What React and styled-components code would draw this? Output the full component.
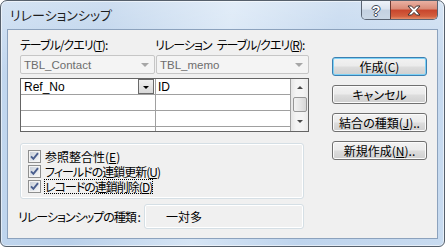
import styled, { createGlobalStyle } from "styled-components";

const JP = `"Noto Sans CJK JP", "Noto Sans", sans-serif`;
const LATIN = `"Liberation Sans", Arial, sans-serif`;

const GlobalStyle = createGlobalStyle`
  html, body {
    margin: 0;
    padding: 0;
    background: #ffffff;
  }
  body {
    font-family: ${JP};
  }
`;

const Window = styled.div`
  box-sizing: border-box;
  width: 445px;
  height: 247px;
  padding: 0 6px 7px;
  display: flex;
  flex-direction: column;
  border: 1px solid #56606c;
  border-radius: 7px 7px 6px 6px;
  box-shadow: inset 0 0 0 1px rgba(255, 255, 255, 0.55);
  background:
    linear-gradient(180deg, rgba(255, 255, 255, 0.3), rgba(255, 255, 255, 0) 30%),
    linear-gradient(100deg, #c3d8ef 0%, #b9d0ea 22%, #d6e5f5 48%, #bed4ed 70%, #c8dbf0 100%);
`;

const TitleBar = styled.div`
  height: 28px;
  display: flex;
  align-items: flex-start;
`;

const Title = styled.div`
  align-self: center;
  padding: 0 0 1px 3px;
  font-family: ${JP};
  font-feature-settings: "palt";
  font-size: 13px;
  color: #1e1e1e;
`;

const CaptionButtons = styled.div`
  margin-left: auto;
  display: flex;
  height: 19px;
  border: 1px solid #5a6473;
  border-top: none;
  border-radius: 0 0 5px 5px;
  overflow: hidden;
  box-sizing: border-box;
`;

const CaptionButton = styled.div`
  width: ${(p) => p.$w}px;
  display: flex;
  align-items: center;
  justify-content: center;
  box-sizing: border-box;
  background: ${(p) =>
    p.$close
      ? "linear-gradient(#eab1a3 0%, #d98a76 45%, #c8452c 50%, #d3603f 85%, #e6916e 100%)"
      : "linear-gradient(#eef3f9 0%, #dbe4ef 45%, #c4d1e1 50%, #cad7e6 100%)"};
  border-left: ${(p) => (p.$close ? "1px solid #6b3a33" : "none")};
`;

const HelpGlyph = styled.span`
  font-family: ${LATIN};
  font-weight: bold;
  font-size: 14px;
  line-height: 1;
  color: #ffffff;
  text-shadow: 1px 0 #3f4a5a, -1px 0 #3f4a5a, 0 1px #3f4a5a, 0 -1px #3f4a5a;
  margin-top: 1px;
`;

const Client = styled.div`
  flex: 1;
  display: flex;
  align-items: flex-start;
  box-sizing: border-box;
  border: 1px solid #8ca2bd;
  background: #f0f0f0;
  font-family: ${JP};
  font-feature-settings: "palt";
  font-size: 12px;
  color: #000;
`;

const LeftColumn = styled.div`
  width: 289px;
  margin-left: 12px;
  padding-top: 8px;
  display: flex;
  flex-direction: column;
`;

const LabelRow = styled.div`
  display: flex;
  height: 14px;
  line-height: 14px;
`;

const Label = styled.div`
  flex: none;
  width: ${(p) => p.$w || "auto"};
  white-space: nowrap;
  letter-spacing: -1px;
`;

const ComboRow = styled.div`
  display: flex;
  gap: 1px;
  margin-top: 3px;
`;

const Combo = styled.div`
  box-sizing: border-box;
  width: ${(p) => p.$w}px;
  height: 19px;
  border: 1px solid #c6c6c6;
  border-radius: 2px;
  background: #f4f4f4;
  display: flex;
  align-items: center;
  padding: 0 5px 0 3px;
  font-family: ${LATIN};
  font-size: 11.5px;
  color: #6d6d6d;
`;

const ComboText = styled.span`
  flex: 1;
`;

const Triangle = styled.span`
  width: 0;
  height: 0;
  border-left: ${(p) => p.$s}px solid transparent;
  border-right: ${(p) => p.$s}px solid transparent;
  ${(p) => (p.$up ? "border-bottom" : "border-top")}: ${(p) => p.$s}px solid ${(p) => p.$c};
`;

const Grid = styled.div`
  box-sizing: border-box;
  margin-top: 4px;
  height: 54px;
  border: 1px solid #646464;
  background: #ffffff;
  display: flex;
  overflow: hidden;
`;

const Cells = styled.div`
  width: 270px;
  display: flex;
  flex-direction: column;
`;

const Row = styled.div`
  display: grid;
  grid-template-columns: 135px 135px;
  flex: none;
  height: 16px;
  box-sizing: border-box;
  border-bottom: 1px solid #a0a0a0;
`;

const Cell = styled.div`
  border-right: 1px solid #a0a0a0;
  display: flex;
  align-items: center;
  padding-left: ${(p) => p.$pad}px;
  font-family: ${LATIN};
  font-size: 12px;
  color: #000;
`;

const CellText = styled.span`
  flex: 1;
`;

const DropButton = styled.div`
  box-sizing: border-box;
  width: 16px;
  height: 15px;
  margin-right: 1px;
  border: 1px solid #6a6a6a;
  background: linear-gradient(#f0f0f0, #d8d8d8);
  display: flex;
  align-items: flex-end;
  justify-content: center;
  padding-bottom: 4px;
`;

const Scrollbar = styled.div`
  width: 17px;
  display: flex;
  flex-direction: column;
  background: linear-gradient(90deg, #e6e6e6, #f4f4f4 30%, #f4f4f4 70%, #eaeaea);
`;

const ScrollArrow = styled.div`
  height: ${(p) => p.$h}px;
  flex: none;
  display: flex;
  align-items: center;
  justify-content: center;
`;

const Thumb = styled.div`
  height: 15px;
  margin: 1px 1px 0 2px;
  box-sizing: border-box;
  border: 1px solid #979797;
  border-radius: 2px;
  background: linear-gradient(90deg, #f2f2f2, #e6e6e6 50%, #d6d6d6);
`;

const GroupBox = styled.div`
  box-sizing: border-box;
  width: 284px;
  height: 56px;
  margin-top: 11px;
  border: 1px solid #d5dfe5;
  border-radius: 3px;
  box-shadow: inset 0 0 0 1px #ffffff;
  padding: 5px 0 0 7px;
  display: flex;
  flex-direction: column;
`;

const CheckRow = styled.div`
  height: 15px;
  display: flex;
  align-items: center;
  gap: 4px;
`;

const CheckLabel = styled.div`
  height: 13px;
  line-height: 13px;
  white-space: nowrap;
  letter-spacing: ${(p) => p.$ls}px;
  border: 1px ${(p) => (p.$focus ? "dotted #000" : "solid transparent")};
  margin-left: -1px;
`;

const BottomRow = styled.div`
  display: flex;
  align-items: center;
  margin-top: 5px;
  margin-left: -2px;
`;

const BottomLabel = styled.div`
  flex: none;
  width: 126px;
  white-space: nowrap;
  letter-spacing: -1px;
`;

const ReadOnlyBox = styled.div`
  box-sizing: border-box;
  width: 160px;
  height: 25px;
  border: 1px solid #d5dfe5;
  border-radius: 3px;
  box-shadow: inset 0 0 0 1px #ffffff;
  display: flex;
  align-items: center;
  padding: 0 0 1px 21px;
`;

const RightColumn = styled.div`
  margin-left: 23px;
  margin-top: 27px;
  display: flex;
  flex-direction: column;
  gap: 9px;
`;

const Button = styled.button`
  box-sizing: border-box;
  width: 95px;
  height: 19px;
  padding: 0;
  border: 1px solid ${(p) => (p.$default ? "#3c7fb1" : "#707070")};
  border-radius: 3px;
  background: linear-gradient(#f2f2f2 0%, #ebebeb 48%, #dddddd 52%, #cfcfcf 100%);
  box-shadow: ${(p) => (p.$default ? "inset 0 0 0 1px #7ed2f6" : "inset 0 0 0 1px #fbfbfb")};
  font-family: ${JP};
  font-feature-settings: "palt";
  font-size: 12px;
  line-height: 16px;
  color: #000;
  white-space: nowrap;
`;

const CheckBox = () => (
  <svg width="13" height="13" viewBox="0 0 13 13">
    <defs>
      <linearGradient id="cbfill" x1="0" y1="0" x2="1" y2="1">
        <stop offset="0" stopColor="#c9d0da" />
        <stop offset="1" stopColor="#f6f7f8" />
      </linearGradient>
    </defs>
    <rect x="0.5" y="0.5" width="12" height="12" fill="#f4f4f4" stroke="#8e8f8f" />
    <rect x="2" y="2" width="9" height="9" fill="url(#cbfill)" />
    <path d="M3 6.3 L5.4 8.9 L10 3.2" fill="none" stroke="#4a5f8f" strokeWidth="1.9" />
  </svg>
);

const CloseIcon = () => (
  <svg width="14" height="11" viewBox="0 0 14 11">
    <path
      d="M1 1 H4.5 L7 3.6 L9.5 1 H13 L9 5.5 L13 10 H9.5 L7 7.4 L4.5 10 H1 L5 5.5 Z"
      fill="#ffffff"
      stroke="#3d3030"
      strokeWidth="1"
      strokeLinejoin="round"
    />
  </svg>
);

const checks = [
  { key: "e", label: "参照整合性(", acc: "E", ls: 0 },
  { key: "u", label: "フィールドの連鎖更新(", acc: "U", ls: -1 },
  { key: "d", label: "レコードの連鎖削除(", acc: "D", ls: -1, focus: true },
];

const App = () => {
  return (
    <>
      <GlobalStyle />
      <Window>
        <TitleBar>
          <Title>リレーションシップ</Title>
          <CaptionButtons>
            <CaptionButton $w={28}>
              <HelpGlyph>?</HelpGlyph>
            </CaptionButton>
            <CaptionButton $w={47} $close>
              <CloseIcon />
            </CaptionButton>
          </CaptionButtons>
        </TitleBar>
        <Client>
          <LeftColumn>
            <LabelRow>
              <Label $w="135px">
                テーブル/クエリ(<u>T</u>):
              </Label>
              <Label>
                リレーション{"\u2002"}テーブル/クエリ(<u>R</u>):
              </Label>
            </LabelRow>
            <ComboRow>
              <Combo $w={135}>
                <ComboText>TBL_Contact</ComboText>
                <Triangle $s={4} $c="#a6a6a6" />
              </Combo>
              <Combo $w={153}>
                <ComboText>TBL_memo</ComboText>
                <Triangle $s={4} $c="#a6a6a6" />
              </Combo>
            </ComboRow>
            <Grid>
              <Cells>
                <Row>
                  <Cell $pad={3}>
                    <CellText>Ref_No</CellText>
                    <DropButton>
                      <Triangle $s={3.5} $c="#000" />
                    </DropButton>
                  </Cell>
                  <Cell $pad={2}>ID</Cell>
                </Row>
                <Row>
                  <Cell />
                  <Cell />
                </Row>
                <Row>
                  <Cell />
                  <Cell />
                </Row>
                <Row>
                  <Cell />
                  <Cell />
                </Row>
              </Cells>
              <Scrollbar>
                <ScrollArrow $h={17}>
                  <Triangle $s={3.5} $c="#4a4a4a" $up />
                </ScrollArrow>
                <Thumb />
                <ScrollArrow $h={18}>
                  <Triangle $s={3.5} $c="#4a4a4a" />
                </ScrollArrow>
              </Scrollbar>
            </Grid>
            <GroupBox>
              {checks.map((c) => (
                <CheckRow key={c.key}>
                  <CheckBox />
                  <CheckLabel $focus={c.focus} $ls={c.ls}>
                    {c.label}
                    <u>{c.acc}</u>)
                  </CheckLabel>
                </CheckRow>
              ))}
            </GroupBox>
            <BottomRow>
              <BottomLabel>リレーションシップの種類 :</BottomLabel>
              <ReadOnlyBox>一対多</ReadOnlyBox>
            </BottomRow>
          </LeftColumn>
          <RightColumn>
            <Button $default>作成(C)</Button>
            <Button>キャンセル</Button>
            <Button>
              結合の種類(<u>J</u>)..
            </Button>
            <Button>
              新規作成(<u>N</u>)..
            </Button>
          </RightColumn>
        </Client>
      </Window>
    </>
  );
};

export default App;
